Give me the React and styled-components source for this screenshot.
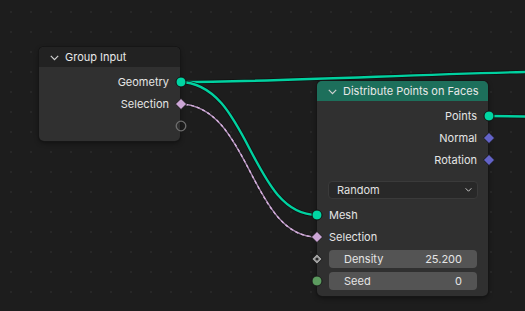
import styled, { createGlobalStyle } from "styled-components";

const GlobalStyle = createGlobalStyle`
  html, body {
    margin: 0;
    padding: 0;
    background: #1d1d1d;
  }
  body {
    font-family: Inter, "DejaVu Sans", sans-serif;
    font-size: 11px;
    color: #e5e5e5;
  }
`;

const Editor = ({ children }) => (
  <Canvas>
    <Wires />
    {children}
  </Canvas>
);

const Wires = () => (
  <WireLayer width="525" height="311">
    <path d="M179 82 C290 82 450 72 580 71" stroke="#111" strokeWidth="4" fill="none" />
    <path d="M179 82 C290 82 450 72 580 71" stroke="#00d1a0" strokeWidth="2.4" fill="none" />
    <path d="M488 116 L560 117" stroke="#111" strokeWidth="4" fill="none" />
    <path d="M488 116 L560 117" stroke="#00d1a0" strokeWidth="2.4" fill="none" />
    <path d="M179 82 C250 82 250 215 317 215" stroke="#111" strokeWidth="4" fill="none" />
    <path d="M179 82 C250 82 250 215 317 215" stroke="#00d1a0" strokeWidth="2.4" fill="none" />
    <path d="M179 104 C250 104 250 237 317 237" stroke="#161616" strokeWidth="3" fill="none" />
    <path d="M179 104 C250 104 250 237 317 237" stroke="#a88ab0" strokeWidth="1.4" fill="none" />
    <path d="M179 104 C250 104 250 237 317 237" stroke="#d8b2e0" strokeWidth="1.4" strokeDasharray="3 3" fill="none" />
  </WireLayer>
);

const Chevron = ({ small }) => (
  <svg width={small ? 7 : 9} height="6" viewBox="0 0 9 6">
    <path d="M0.8 0.8 L4.5 4.6 L8.2 0.8" stroke="#d0d0d0" strokeWidth="1.2" fill="none" />
  </svg>
);

const Socket = ({ side, kind }) => (
  <SocketMark $side={side}>
    {kind === "geo" && (
      <svg width="12" height="12" viewBox="0 0 12 12">
        <circle cx="6" cy="6" r="5" fill="#00d6a3" stroke="#111" strokeWidth="1" />
      </svg>
    )}
    {kind === "empty" && (
      <svg width="12" height="12" viewBox="0 0 12 12">
        <circle cx="6" cy="6" r="4.8" fill="none" stroke="#6e6e6e" strokeWidth="1.3" />
      </svg>
    )}
    {kind === "seed" && (
      <svg width="12" height="12" viewBox="0 0 12 12">
        <circle cx="6" cy="6" r="5" fill="#5c9b5f" stroke="#1a1a1a" strokeWidth="1" />
      </svg>
    )}
    {kind === "bool" && (
      <svg width="12" height="12" viewBox="0 0 12 12">
        <path d="M6 0.4 L11.6 6 L6 11.6 L0.4 6 Z" fill="#cca6d6" stroke="#1a1a1a" strokeWidth="1" />
      </svg>
    )}
    {kind === "vec" && (
      <svg width="12" height="12" viewBox="0 0 12 12">
        <path d="M6 0.4 L11.6 6 L6 11.6 L0.4 6 Z" fill="#6363c7" stroke="#1a1a1a" strokeWidth="1" />
      </svg>
    )}
    {kind === "float" && (
      <svg width="12" height="12" viewBox="0 0 12 12">
        <path d="M6 0.8 L11.2 6 L6 11.2 L0.8 6 Z" fill="#a1a1a1" stroke="#1a1a1a" strokeWidth="1" />
        <circle cx="6" cy="6" r="1.6" fill="#2a2a2a" />
      </svg>
    )}
  </SocketMark>
);

const Node = ({ x, y, width, title, accent, children }) => (
  <NodeBox style={{ left: x, top: y, width }}>
    <Header $accent={accent}>
      <Chevron />
      <span>{title}</span>
    </Header>
    <Body>{children}</Body>
  </NodeBox>
);

const App = () => (
  <>
    <GlobalStyle />
    <Editor>
      <Node x={39} y={47} width={141} title="Group Input" accent="#222222">
        <OutRow>
          Geometry
          <Socket side="right" kind="geo" />
        </OutRow>
        <OutRow>
          Selection
          <Socket side="right" kind="bool" />
        </OutRow>
        <OutRow>
          <Socket side="right" kind="empty" />
        </OutRow>
      </Node>

      <Node x={317} y={81} width={171} title="Distribute Points on Faces" accent="#1d6f5b">
        <OutRow>
          Points
          <Socket side="right" kind="geo" />
        </OutRow>
        <OutRow>
          Normal
          <Socket side="right" kind="vec" />
        </OutRow>
        <OutRow>
          Rotation
          <Socket side="right" kind="vec" />
        </OutRow>
        <DropWrap>
          <Dropdown>
            <span>Random</span>
            <Chevron small />
          </Dropdown>
        </DropWrap>
        <InRow>
          <Socket side="left" kind="geo" />
          Mesh
        </InRow>
        <InRow>
          <Socket side="left" kind="bool" />
          Selection
        </InRow>
        <InRow>
          <Socket side="left" kind="float" />
          <Field>
            <span>Density</span>
            <span>25.200</span>
          </Field>
        </InRow>
        <InRow>
          <Socket side="left" kind="seed" />
          <Field>
            <span>Seed</span>
            <span>0</span>
          </Field>
        </InRow>
      </Node>
    </Editor>
  </>
);

const Canvas = styled.div`
  position: relative;
  width: 525px;
  height: 311px;
  overflow: hidden;
  background-color: #1d1d1d;
  background-image: radial-gradient(circle, #272727 1px, transparent 1.2px);
  background-size: 20px 20px;
  background-position: 1px 2px;
`;

const WireLayer = styled.svg`
  position: absolute;
  left: 0;
  top: 0;
`;

const NodeBox = styled.div`
  position: absolute;
  display: flex;
  flex-direction: column;
  border-radius: 5px;
  background: #303030;
  box-shadow: 0 0 0 1px #161616, 0 2px 5px rgba(0, 0, 0, 0.45);
`;

const Header = styled.div`
  height: 20px;
  display: flex;
  align-items: center;
  gap: 6px;
  padding-left: 11px;
  border-radius: 5px 5px 0 0;
  background: ${(p) => p.$accent};
  color: #e8e8e8;
  white-space: nowrap;

  svg {
    margin-top: 1px;
  }
`;

const Body = styled.div`
  display: flex;
  flex-direction: column;
  padding: 4px 0 4px;
`;

const Row = styled.div`
  position: relative;
  height: 22px;
  display: flex;
  align-items: center;
  white-space: nowrap;
`;

const OutRow = styled(Row)`
  justify-content: flex-end;
  padding-right: 11px;
`;

const InRow = styled(Row)`
  padding: 0 11px 0 12px;
`;

const SocketMark = styled.div`
  position: absolute;
  top: 5px;
  ${(p) => (p.$side === "right" ? "right: -6.5px;" : "left: -6px;")}
  width: 12px;
  height: 12px;
  display: flex;

  svg {
    display: block;
  }
`;

const DropWrap = styled.div`
  padding: 10px 10px 5px 11px;
`;

const Dropdown = styled.div`
  height: 18px;
  box-sizing: border-box;
  display: flex;
  align-items: center;
  justify-content: space-between;
  padding: 0 5px 0 8px;
  background: #282828;
  border: 1px solid #3a3a3a;
  border-radius: 4px;
  color: #e0e0e0;
`;

const Field = styled.div`
  flex: 1;
  height: 18px;
  display: flex;
  align-items: center;
  justify-content: space-between;
  padding: 0 15px;
  background: #545454;
  border-radius: 4px;
  color: #e5e5e5;
`;

export default App;
